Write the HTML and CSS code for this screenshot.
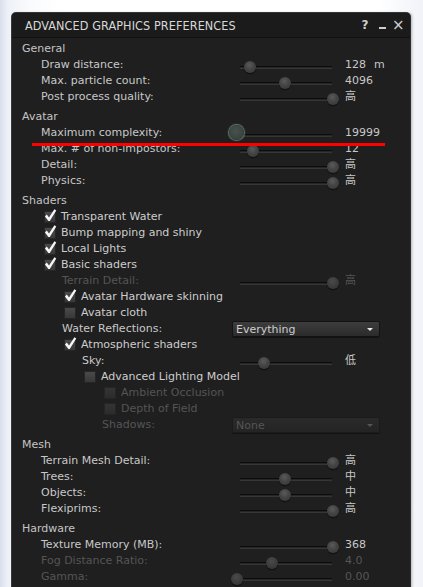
FILE: index.html
```html
<!DOCTYPE html>
<html>
<head>
<meta charset="utf-8">
<link rel="stylesheet" href="styles.css">
</head>
<body>
<div class="window">
  <div class="titlebar">
    <span class="title">ADVANCED GRAPHICS PREFERENCES</span>
    <span class="controls"><span class="help">?</span><span class="min"></span><span class="close">×</span></span>
  </div>
  <div class="body">
    <div class="section">
      <div class="head">General</div>
      <div class="row l1"><span class="label">Draw distance:</span><div class="slider"><span class="track"></span><span class="thumb" style="--p:0.135"></span></div><span class="value">128<span class="unit">m</span></span></div>
      <div class="row l1"><span class="label">Max. particle count:</span><div class="slider"><span class="track"></span><span class="thumb" style="--p:0.5"></span></div><span class="value">4096</span></div>
      <div class="row l1"><span class="label">Post process quality:</span><div class="slider"><span class="track"></span><span class="thumb" style="--p:1"></span></div><span class="value">高</span></div>
    </div>
    <div class="section">
      <div class="head">Avatar</div>
      <div class="row l1"><span class="label">Maximum complexity:</span><div class="slider"><span class="track"></span><span class="thumb focus" style="--p:0"></span></div><span class="value">19999</span></div>
      <div class="row l1"><span class="label">Max. # of non-impostors:</span><div class="slider"><span class="track"></span><span class="thumb" style="--p:0.167"></span></div><span class="value">12</span></div>
      <div class="row l1"><span class="label">Detail:</span><div class="slider"><span class="track"></span><span class="thumb" style="--p:1"></span></div><span class="value">高</span></div>
      <div class="row l1"><span class="label">Physics:</span><div class="slider"><span class="track"></span><span class="thumb" style="--p:1"></span></div><span class="value">高</span></div>
    </div>
    <div class="section">
      <div class="head">Shaders</div>
      <div class="crow c1"><span class="box"><svg class="check" viewBox="0 0 14 14"><polygon points="1,8 3,6 5.4,9.2 11.2,0.3 13.2,1.6 6.2,13 4.8,13"/></svg></span><span class="clabel">Transparent Water</span></div>
      <div class="crow c1"><span class="box"><svg class="check" viewBox="0 0 14 14"><polygon points="1,8 3,6 5.4,9.2 11.2,0.3 13.2,1.6 6.2,13 4.8,13"/></svg></span><span class="clabel">Bump mapping and shiny</span></div>
      <div class="crow c1"><span class="box"><svg class="check" viewBox="0 0 14 14"><polygon points="1,8 3,6 5.4,9.2 11.2,0.3 13.2,1.6 6.2,13 4.8,13"/></svg></span><span class="clabel">Local Lights</span></div>
      <div class="crow c1"><span class="box"><svg class="check" viewBox="0 0 14 14"><polygon points="1,8 3,6 5.4,9.2 11.2,0.3 13.2,1.6 6.2,13 4.8,13"/></svg></span><span class="clabel">Basic shaders</span></div>
      <div class="row l2 disabled"><span class="label">Terrain Detail:</span><div class="slider"><span class="track"></span><span class="thumb" style="--p:1"></span></div><span class="value">高</span></div>
      <div class="crow c2"><span class="box"><svg class="check" viewBox="0 0 14 14"><polygon points="1,8 3,6 5.4,9.2 11.2,0.3 13.2,1.6 6.2,13 4.8,13"/></svg></span><span class="clabel">Avatar Hardware skinning</span></div>
      <div class="crow c2"><span class="box"></span><span class="clabel">Avatar cloth</span></div>
      <div class="row l2"><span class="label">Water Reflections:</span><div class="dropdown"><span>Everything</span><span class="arrow"></span></div></div>
      <div class="crow c2"><span class="box"><svg class="check" viewBox="0 0 14 14"><polygon points="1,8 3,6 5.4,9.2 11.2,0.3 13.2,1.6 6.2,13 4.8,13"/></svg></span><span class="clabel">Atmospheric shaders</span></div>
      <div class="row l3"><span class="label">Sky:</span><div class="slider"><span class="track"></span><span class="thumb" style="--p:0.28"></span></div><span class="value">低</span></div>
      <div class="crow c3"><span class="box"></span><span class="clabel">Advanced Lighting Model</span></div>
      <div class="crow c4 disabled"><span class="box"></span><span class="clabel">Ambient Occlusion</span></div>
      <div class="crow c4 disabled"><span class="box"></span><span class="clabel">Depth of Field</span></div>
      <div class="row l4 disabled"><span class="label">Shadows:</span><div class="dropdown"><span>None</span><span class="arrow"></span></div></div>
    </div>
    <div class="section">
      <div class="head">Mesh</div>
      <div class="row l1"><span class="label">Terrain Mesh Detail:</span><div class="slider"><span class="track"></span><span class="thumb" style="--p:1"></span></div><span class="value">高</span></div>
      <div class="row l1"><span class="label">Trees:</span><div class="slider"><span class="track"></span><span class="thumb" style="--p:0.5"></span></div><span class="value">中</span></div>
      <div class="row l1"><span class="label">Objects:</span><div class="slider"><span class="track"></span><span class="thumb" style="--p:0.5"></span></div><span class="value">中</span></div>
      <div class="row l1"><span class="label">Flexiprims:</span><div class="slider"><span class="track"></span><span class="thumb" style="--p:1"></span></div><span class="value">高</span></div>
    </div>
    <div class="section">
      <div class="head">Hardware</div>
      <div class="row l1"><span class="label">Texture Memory (MB):</span><div class="slider"><span class="track"></span><span class="thumb" style="--p:1"></span></div><span class="value">368</span></div>
      <div class="row l1 disabled"><span class="label">Fog Distance Ratio:</span><div class="slider"><span class="track"></span><span class="thumb" style="--p:0.365"></span></div><span class="value">4.0</span></div>
      <div class="row l1 disabled"><span class="label">Gamma:</span><div class="slider"><span class="track"></span><span class="thumb" style="--p:0"></span></div><span class="value">0.00</span></div>
    </div>
  </div>
  <div class="redline"></div>
</div>
</body>
</html>
```
FILE: styles.css
```css
html, body {
  margin: 0;
  padding: 0;
  height: 100%;
  overflow: hidden;
}
body {
  background: linear-gradient(to right, #d9e0ec 0px, #eef1f7 8px, #fafbfd 30px, #ffffff 60px, #ffffff 380px, #f1f3f8 423px);
  font-family: "DejaVu Sans", "Noto Sans CJK SC", sans-serif;
  font-size: 11px;
  color: #c8c8c8;
}
.window {
  position: relative;
  margin: 13px 0 0 12px;
  width: 398px;
  height: 600px;
  background: #1f1f1f;
  border-radius: 4px 4px 0 0;
  box-shadow: 2px 0 3px rgba(0,0,0,0.28), 0 0 0 1px #3a3a3a;
}
.titlebar {
  height: 24px;
  border-bottom: 1px solid #111;
  background: #1b1b1b;
  border-radius: 4px 4px 0 0;
  display: flex;
  align-items: center;
  justify-content: space-between;
  padding: 0 6px 0 13px;
}
.title {
  font-family: "DejaVu Sans Condensed", "DejaVu Sans", sans-serif;
  font-size: 12.5px;
  color: #d8d8d8;
  letter-spacing: 0.1px;
}
.controls {
  display: flex;
  align-items: center;
  color: #cfcfcf;
}
.help {
  font-weight: bold;
  font-size: 12px;
  width: 18px;
  text-align: center;
}
.min {
  width: 7px;
  height: 2px;
  background: #cfcfcf;
  margin: 6px 6px 0 5px;
}
.close {
  font-size: 15px;
  width: 12px;
  text-align: center;
  line-height: 12px;
}
.body {
  padding-top: 3px;
}
.section + .section {
  margin-top: 4px;
}
.head {
  height: 16px;
  line-height: 16px;
  padding-left: 10px;
  color: #c4c4c4;
}
.row {
  display: grid;
  grid-template-columns: 220px 108px 1fr;
  height: 16px;
  align-items: center;
}
.label {
  white-space: nowrap;
  line-height: 16px;
}
.l1 .label { padding-left: 29px; }
.l2 .label { padding-left: 50px; }
.l3 .label { padding-left: 70px; }
.l4 .label { padding-left: 90px; }
.value {
  padding-left: 5px;
  white-space: nowrap;
  line-height: 16px;
}
.unit {
  margin-left: 8px;
}
.slider {
  position: relative;
  height: 16px;
}
.track {
  position: absolute;
  left: 8px;
  right: 8px;
  top: 9px;
  height: 1px;
  background: #262626;
  border-top: 1px solid #0c0c0c;
  border-bottom: 1px solid #363636;
}
.thumb {
  position: absolute;
  top: 4px;
  left: calc(5px + var(--p) * 96px - 6px);
  width: 12px;
  height: 12px;
  border-radius: 50%;
  background: radial-gradient(circle at 45% 35%, #5a5a5a 0%, #444 45%, #333 100%);
  box-shadow: 0 1px 1px rgba(0,0,0,0.6);
}
.thumb.focus {
  top: 0px;
  left: calc(5px + var(--p) * 96px - 8px);
  width: 15px;
  height: 15px;
  background: radial-gradient(circle at 45% 40%, #46524d 0%, #3a4540 60%, #333d39 100%);
  box-shadow: 0 0 0 1px #5b6b64, 0 0 2px 1px rgba(110,140,125,0.4);
}
.disabled .label, .disabled .value, .disabled .clabel {
  color: #555;
}
.disabled .thumb {
  background: radial-gradient(circle at 45% 35%, #4a4a4a 0%, #3c3c3c 50%, #303030 100%);
}
.crow {
  display: flex;
  align-items: center;
  height: 16px;
}
.c1 { padding-left: 32px; }
.c2 { padding-left: 52px; }
.c3 { padding-left: 72px; }
.c4 { padding-left: 92px; }
.box {
  position: relative;
  width: 12px;
  height: 12px;
  margin-right: 5px;
  background: linear-gradient(#4a4a4a, #383838);
  border: 1px solid #262626;
  box-sizing: border-box;
  flex: none;
}
.disabled .box {
  background: linear-gradient(#343434, #2c2c2c);
  border-color: #252525;
}
.check {
  position: absolute;
  left: -1px;
  top: -3px;
  width: 13px;
  height: 13px;
  fill: #f6f6f6;
}
.clabel {
  white-space: nowrap;
  line-height: 16px;
  color: #cdcdcd;
}
.dropdown {
  grid-column: 2 / 4;
  width: 148px;
  height: 16px;
  box-sizing: border-box;
  border: 1px solid #131313;
  border-radius: 2px;
  background: linear-gradient(#3d3d3d, #2b2b2b);
  display: flex;
  align-items: center;
  justify-content: space-between;
  padding: 0 6px 0 3px;
  color: #cdcdcd;
  box-shadow: 0 1px 0 rgba(0,0,0,0.4);
}
.arrow {
  width: 0;
  height: 0;
  border-left: 3.5px solid transparent;
  border-right: 3.5px solid transparent;
  border-top: 3.5px solid #e8e8e8;
}
.disabled .dropdown {
  background: linear-gradient(#2a2a2a, #242424);
  border-color: #1b1b1b;
  color: #555;
}
.disabled .arrow {
  border-top-color: #555;
}
.redline {
  position: absolute;
  left: 20px;
  top: 130px;
  width: 353px;
  height: 3px;
  background: #f00;
}
```
